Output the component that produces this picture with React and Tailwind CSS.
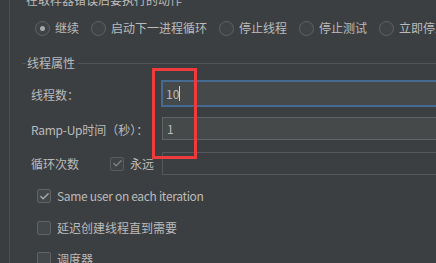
import { Check } from 'lucide-react'

const font = { fontFamily: '"Noto Sans CJK SC", "Noto Sans", sans-serif' }

function Radio({ label, checked = false }) {
  return (
    <div className="flex items-center gap-[5px] shrink-0">
      <div className="w-[15px] h-[15px] rounded-full border border-[#5f6365] bg-[#3f4345] flex items-center justify-center">
        {checked && <div className="w-[5px] h-[5px] rounded-full bg-[#a8a8a8]" />}
      </div>
      <span className="whitespace-nowrap">{label}</span>
    </div>
  )
}

function CheckBox({ checked = false, dim = false }) {
  return (
    <div
      className={`w-[14px] h-[14px] rounded-[2px] border flex items-center justify-center shrink-0 ${
        dim ? 'border-[#5a5d5f] bg-[#3f4345]' : 'border-[#626567] bg-[#43494a]'
      }`}
    >
      {checked && <Check size={11} strokeWidth={3} className={dim ? 'text-[#7d7f80]' : 'text-[#a9a9a9]'} />}
    </div>
  )
}

export default function App() {
  return (
    <div
      className="relative w-[436px] h-[263px] overflow-hidden bg-[#3c3f41] text-[#bbbbbb] text-[12px] leading-[18px] flex"
      style={font}
    >
      <div className="w-[10px] shrink-0 bg-[#3a3d3f] border-r border-[#4c5052]" />

      <div className="flex-1 min-w-0 flex flex-col">
        <div className="-mt-[9px] pl-[16px] h-[18px] whitespace-nowrap">在取样器错误后要执行的动作</div>

        <div className="mt-[10px] pl-[25px] flex items-center gap-[12px] h-[18px]">
          <Radio label="继续" checked />
          <Radio label="启动下一进程循环" />
          <Radio label="停止线程" />
          <Radio label="停止测试" />
          <Radio label="立即停止线程" />
        </div>

        <div className="mt-[17px] pl-[12px] flex flex-col">
          <div className="flex items-center h-[18px]">
            <div className="w-[4px] h-px bg-[#505456]" />
            <span className="px-[1px]">线程属性</span>
            <div className="ml-[2px] flex-1 h-px bg-[#505456]" />
          </div>

          <div className="pl-[9px] flex flex-col">
            <div className="mt-[8px] flex items-center h-[27px]">
              <span className="w-[130px] shrink-0 pt-[3px]">线程数：</span>
              <div className="flex-1 -mr-[20px] h-[27px] border-2 border-[#466b92] bg-[#45494a] flex items-center pl-[3px]">
                <span>10</span>
                <span className="w-px h-[15px] bg-[#cfcfcf]" />
              </div>
            </div>

            <div className="mt-[10px] flex items-center h-[23px]">
              <span className="w-[131px] shrink-0 pt-[2px] whitespace-nowrap">
                <span className="tracking-[-0.3px]">Ramp-Up</span>时间（秒）：
              </span>
              <div className="flex-1 -mr-[20px] h-[23px] border border-[#616466] bg-[#45494a] flex items-center pl-[4px]">
                1
              </div>
            </div>

            <div className="mt-[12px] flex items-center h-[23px]">
              <span className="w-[79px] shrink-0">循环次数</span>
              <CheckBox checked dim />
              <span className="ml-[6px] w-[32px] shrink-0">永远</span>
              <div className="flex-1 -mr-[20px] h-[23px] border border-[#56595b] bg-[#3c3f41]" />
            </div>
          </div>

          <div className="pl-[15px] flex flex-col">
            <div className="mt-[14px] flex items-center gap-[6px] h-[14px]">
              <CheckBox checked />
              <span className="whitespace-nowrap tracking-[-0.33px]">Same user on each iteration</span>
            </div>
            <div className="mt-[18px] flex items-center gap-[6px] h-[14px]">
              <CheckBox />
              <span className="whitespace-nowrap">延迟创建线程直到需要</span>
            </div>
            <div className="mt-[17px] flex items-center gap-[6px] h-[14px]">
              <CheckBox />
              <span className="whitespace-nowrap">调度器</span>
            </div>
          </div>
        </div>
      </div>

      <div className="absolute left-[152px] top-[68px] w-[45px] h-[91px] border-[3px] border-[#ef3b3b]" />
    </div>
  )
}
